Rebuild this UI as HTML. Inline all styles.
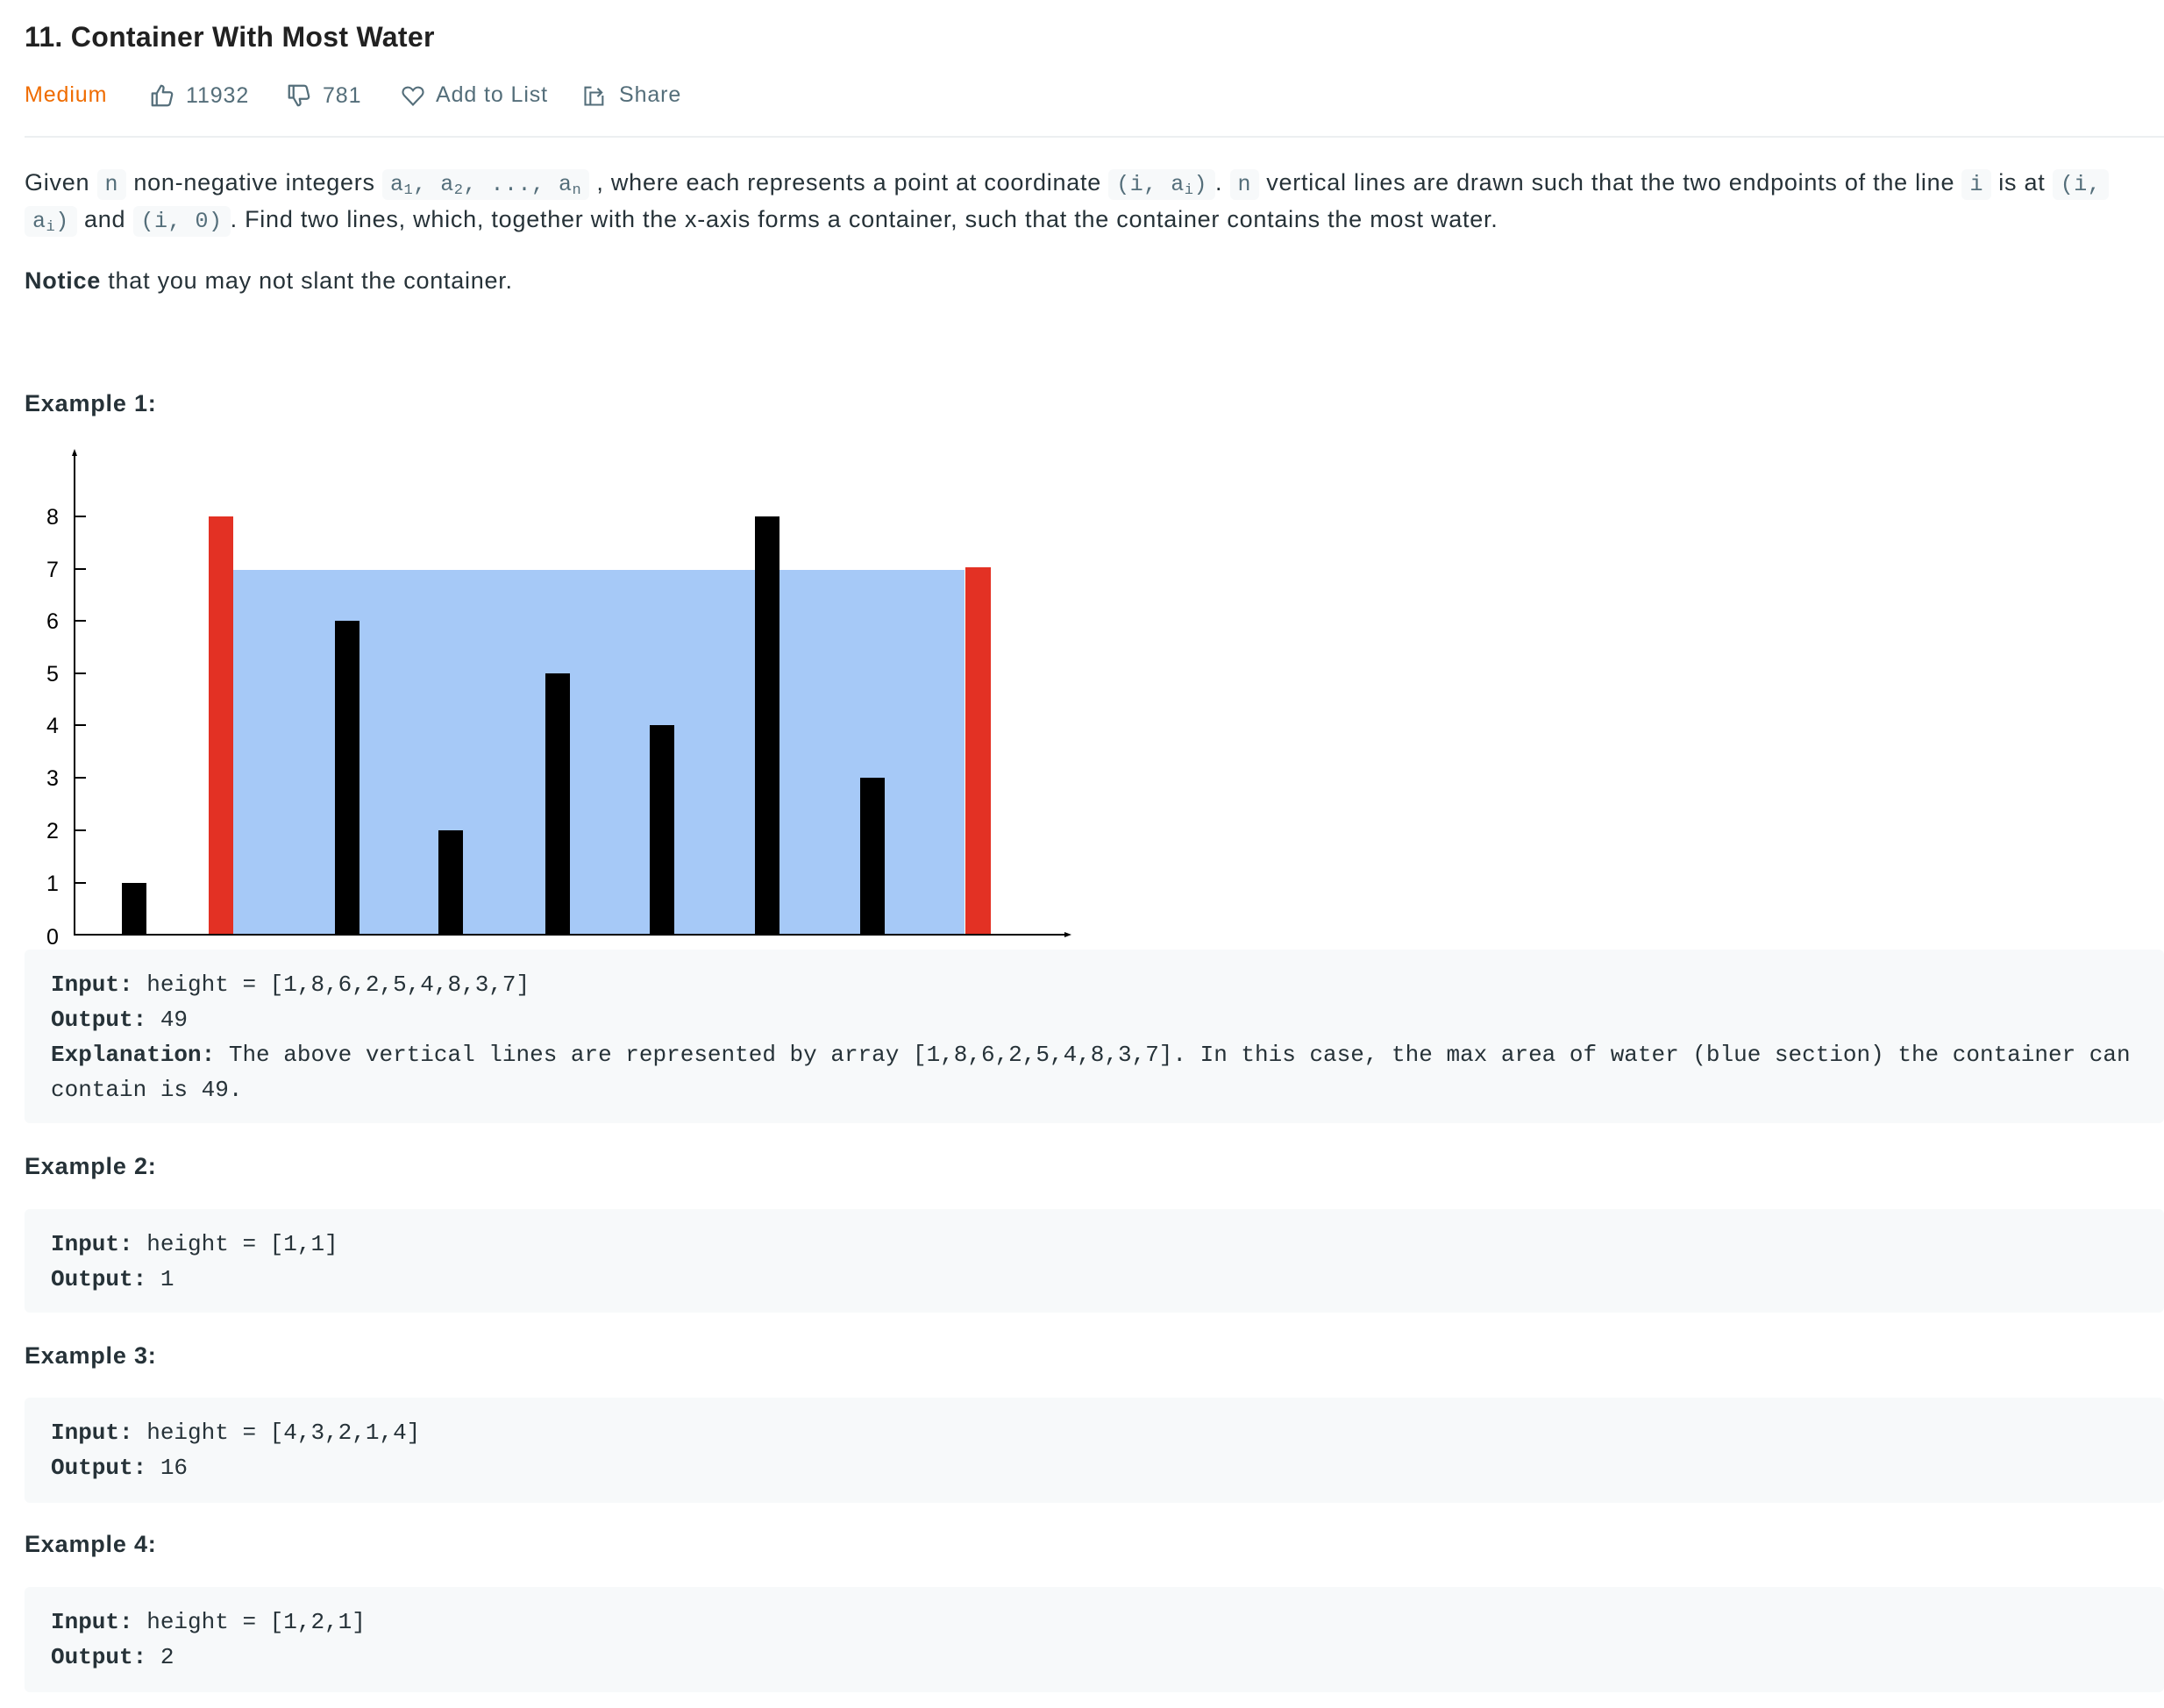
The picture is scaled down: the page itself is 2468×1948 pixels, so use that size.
<!DOCTYPE html>
<html><head><meta charset="utf-8">
<style>
*{margin:0;padding:0;box-sizing:border-box}
body{width:2468px;height:1948px;background:#fff;color:#263238;font-family:"Liberation Sans",sans-serif;position:relative;overflow:hidden}
.a{position:absolute;white-space:nowrap}
.title{left:28px;top:24px;font-size:32px;font-weight:bold;color:#212121;letter-spacing:0.3px}
.meta{top:94px;font-size:25px;letter-spacing:0.9px;color:#546e7a;display:flex;align-items:center}
.hr{left:28px;right:0;top:155px;height:2px;background:#eceff1}
.p{left:28px;font-size:27px;letter-spacing:0.75px;line-height:42px}
code{font-family:"Liberation Mono",monospace;font-size:25px;letter-spacing:0.5px;color:#546e7a;background:#f7f9fa;border-radius:6px;padding:3px 9px}
sub{font-size:17px;vertical-align:-4px}
.h{left:28px;font-size:27px;letter-spacing:0.8px;font-weight:bold}
pre{position:absolute;left:28px;right:0;background:#f7f9fa;border-radius:6px;font-family:"Liberation Mono",monospace;font-size:26px;line-height:40px;padding:20px 30px;color:#263238;white-space:pre}
pre b{font-weight:bold}
</style></head><body>
<div class="a title">11. Container With Most Water</div>
<div class="a meta" style="left:28px;color:#ef6c00">Medium</div>
<div class="a meta" style="left:170px">
<svg width="30" height="30" viewBox="0 0 24 24" fill="none" stroke="#546e7a" stroke-width="1.8" stroke-linejoin="round"><path d="M3 10h4v11H3z M7 10l4-7c1.5 0 2.5 1 2.2 2.6L12.6 9H19c1.3 0 2.2 1.2 1.9 2.4l-1.8 7.6c-.3 1.2-1.2 2-2.4 2H7"/></svg>
<span style="margin-left:12px">11932</span></div>
<div class="a meta" style="left:326px">
<svg width="30" height="30" viewBox="0 0 24 24" fill="none" stroke="#546e7a" stroke-width="1.8" stroke-linejoin="round"><path d="M3 3h4v11H3z M7 14l4 7c1.5 0 2.5-1 2.2-2.6L12.6 15H19c1.3 0 2.2-1.2 1.9-2.4L19.1 5c-.3-1.2-1.2-2-2.4-2H7"/></svg>
<span style="margin-left:12px">781</span></div>
<div class="a meta" style="left:457px">
<svg width="28" height="28" viewBox="0 0 24 24" fill="none" stroke="#546e7a" stroke-width="1.8"><path d="M12 21l-8.5-9C1 9.3 2 4.5 6.5 4c2.5-.3 4.3 1.3 5.5 3 1.2-1.7 3-3.3 5.5-3C22 4.5 23 9.3 20.5 12z"/></svg>
<span style="margin-left:12px">Add to List</span></div>
<div class="a meta" style="left:664px">
<svg width="28" height="28" viewBox="0 0 24 24" fill="none" stroke="#546e7a" stroke-width="1.8"><path d="M9 4H3v17h17v-9 M8 21V9h10 M15 5l4 4-4 4"/></svg>
<span style="margin-left:14px">Share</span></div>
<div class="a hr"></div>
<div class="a p" style="top:187px">Given <code>n</code> non-negative integers <code>a<sub>1</sub>, a<sub>2</sub>, ..., a<sub>n</sub></code> , where each represents a point at coordinate <code>(i, a<sub>i</sub>)</code>. <code>n</code> vertical lines are drawn such that the two endpoints of the line <code>i</code> is at <code>(i,</code></div>
<div class="a p" style="top:229px"><code>a<sub>i</sub>)</code> and <code>(i, 0)</code>. Find two lines, which, together with the x-axis forms a container, such that the container contains the most water.</div>
<div class="a p" style="top:299px"><b>Notice</b> that you may not slant the container.</div>
<div class="a h" style="top:445px">Example 1:</div>
<svg class="a" style="left:0;top:500px" width="1240" height="580" viewBox="0 500 1240 580">
<rect x="266" y="650" width="834" height="416" fill="#a6c9f7"/>
<g fill="#000">
<rect x="139" y="1007" width="28" height="59"/>
<rect x="382" y="708" width="28" height="358"/>
<rect x="500" y="947" width="28" height="119"/>
<rect x="622" y="768" width="28" height="298"/>
<rect x="741" y="827" width="28" height="239"/>
<rect x="861" y="589" width="28" height="477"/>
<rect x="981" y="887" width="28" height="179"/>
</g>
<rect x="238" y="589" width="28" height="477" fill="#e33124"/>
<rect x="1101" y="647" width="29" height="419" fill="#e33124"/>
<g stroke="#000" stroke-width="2">
<line x1="85" y1="518" x2="85" y2="1067"/>
<line x1="84" y1="1066" x2="1218" y2="1066"/>
<line x1="85" y1="589" x2="98" y2="589"/><line x1="85" y1="649" x2="98" y2="649"/><line x1="85" y1="708" x2="98" y2="708"/><line x1="85" y1="768" x2="98" y2="768"/><line x1="85" y1="827" x2="98" y2="827"/><line x1="85" y1="887" x2="98" y2="887"/><line x1="85" y1="947" x2="98" y2="947"/><line x1="85" y1="1007" x2="98" y2="1007"/>
</g>
<path d="M85 512l-3 8h6z M1222 1066l-8-3v6z" fill="#000"/>
<g font-family="Liberation Sans,sans-serif" font-size="25" fill="#000" text-anchor="middle">
<text x="60" y="598">8</text><text x="60" y="658">7</text><text x="60" y="717">6</text><text x="60" y="777">5</text><text x="60" y="836">4</text><text x="60" y="896">3</text><text x="60" y="956">2</text><text x="60" y="1016">1</text><text x="60" y="1077">0</text>
</g>
</svg>
<pre style="top:1083px;height:198px"><b>Input:</b> height = [1,8,6,2,5,4,8,3,7]
<b>Output:</b> 49
<b>Explanation:</b> The above vertical lines are represented by array [1,8,6,2,5,4,8,3,7]. In this case, the max area of water (blue section) the container can
contain is 49.</pre>
<div class="a h" style="top:1315px">Example 2:</div>
<pre style="top:1379px;height:118px"><b>Input:</b> height = [1,1]
<b>Output:</b> 1</pre>
<div class="a h" style="top:1531px">Example 3:</div>
<pre style="top:1594px;height:120px"><b>Input:</b> height = [4,3,2,1,4]
<b>Output:</b> 16</pre>
<div class="a h" style="top:1746px">Example 4:</div>
<pre style="top:1810px;height:120px"><b>Input:</b> height = [1,2,1]
<b>Output:</b> 2</pre>
</body></html>
